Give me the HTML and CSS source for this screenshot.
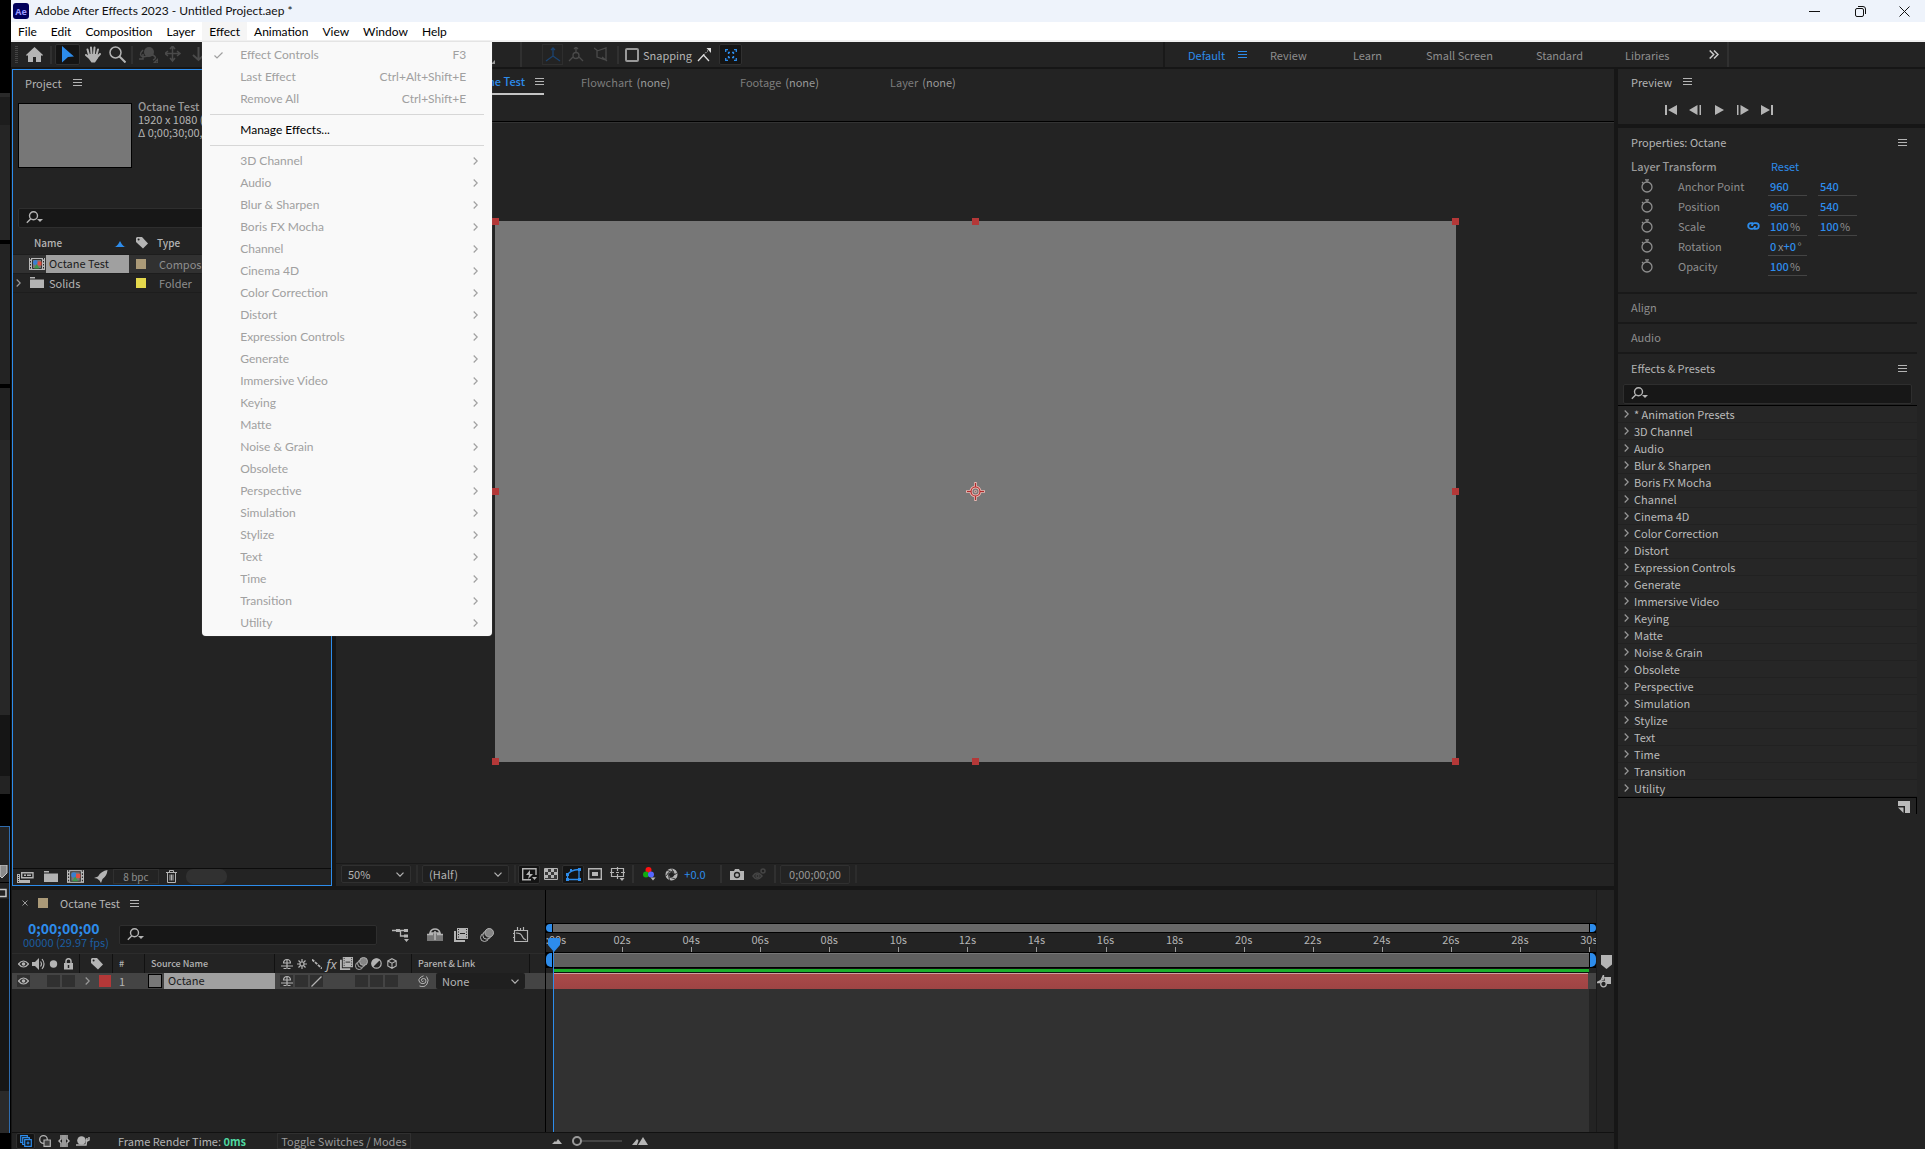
FILE: index.html
```html
<!DOCTYPE html>
<html lang="en">
<head>
<meta charset="utf-8">
<title>Adobe After Effects 2023 - Untitled Project.aep *</title>
<link rel="stylesheet" href="styles.css">
</head>
<body>
<svg class="defs" aria-hidden="true">
  <symbol id="burger" viewBox="0 0 9 9"><path d="M0 1.5h9M0 4.5h9M0 7.5h9" stroke="currentColor"/></symbol>
  <symbol id="search" viewBox="0 0 18 14"><g fill="none" stroke="currentColor" stroke-width="1.4"><circle cx="7.5" cy="4.8" r="4"/><path d="M4.8 7.8L.8 11.8"/></g><path d="M11 8h6l-3 3z" fill="currentColor"/></symbol>
  <symbol id="down" viewBox="0 0 8 5"><path d="M.5.7L4 4.2 7.5.7" fill="none" stroke="currentColor" stroke-width="1.2"/></symbol>
  <symbol id="right" viewBox="0 0 5 8"><path d="M.7.5L4.2 4 .7 7.5" fill="none" stroke="currentColor" stroke-width="1.2"/></symbol>
  <symbol id="watch" viewBox="0 0 12 14"><g fill="none" stroke="currentColor" stroke-width="1.3"><circle cx="6" cy="8" r="5"/><path d="M4 .8h4M6 1v2M1 3l1.6 1.6"/></g></symbol>
  <symbol id="tag" viewBox="0 0 12 12"><path d="M0 1l1-1h5l6 6.5L7 11.500 0 5z" fill="currentColor"/><circle cx="2.600" cy="2.600" r="1" fill="#232323"/></symbol>
  <symbol id="folder" viewBox="0 0 14 11"><path d="M0 0h5v1.500H0zM0 2.500h14V11H0z" fill="currentColor"/></symbol>
  <symbol id="comp" viewBox="0 0 16 12"><path d="M0 0h16v12H0z" fill="#b8b8b8"/><path d="M1.500 0v12M14.500 0v12" stroke="#232323" stroke-dasharray="1.500 1.500"/><path d="M3.500 1.500h9v9h-9z" fill="#777" stroke="#333"/><circle cx="6.500" cy="4.500" r="2.500" fill="#3a7fd0"/><path d="M8.500 3.500h4v4h-4z" fill="#e05040"/><path d="M5 10.500l2.700-4.500 2.800 4.500z" fill="#3c9a48"/></symbol>
  <symbol id="eye" viewBox="0 0 11 8"><path d="M.5 4Q5.500-2 10.500 4 5.500 10 .5 4z" fill="none" stroke="currentColor" stroke-width="1.200"/><circle cx="5.500" cy="4" r="1.800" fill="currentColor"/></symbol>
  <symbol id="shy" viewBox="0 0 12 12"><g fill="none" stroke="currentColor" stroke-width="1.200"><path d="M2.500 5.500Q2.500 1.500 6 1.500T9.500 5.500M2 5h8M0 8h12M6 2v9M2.500 10.500H5M7 10.500h2.500"/></g></symbol>
  <symbol id="film" viewBox="0 0 14 14"><path d="M3 0h11v11H3zM0 3h2v9h9v2H0z" fill="currentColor"/><path d="M4.500 1v9M12.500 1v9" stroke="#232323" stroke-dasharray="1 1.500"/><path d="M6 5.500h5" stroke="#232323"/></symbol>
  <symbol id="blur" viewBox="0 0 14 14"><g fill="#232323" stroke="currentColor"><circle cx="4.500" cy="9.500" r="4"/><circle cx="6.800" cy="7.200" r="4"/><circle cx="9.200" cy="4.800" r="4.300" fill="#858585"/></g></symbol>
</svg>

<div class="desktop">
<div class="behind" aria-hidden="true">
  <i class="b1"></i><i class="b2"></i><i class="b3"></i><i class="b4"></i><i class="b5"></i><i class="b6"></i>
  <div class="b7">
    <svg width="9" height="44" viewBox="0 0 9 44"><path d="M0 0h7v8L2 13l-2-2z" fill="#8a8a8a" stroke="#c8c8c8"/><path d="M0 17.500h9" stroke="#000"/><path d="M0 24.500h6v7H0" fill="none" stroke="#c8c8c8" stroke-width="1.500"/></svg>
  </div>
</div>

<div class="app">
  <header class="titlebar">
    <svg width="16" height="16" viewBox="0 0 16 16"><rect width="16" height="16" rx="3" fill="#00005b"/><text x="8" y="12" text-anchor="middle" class="logo-text">Ae</text></svg>
    <h1>Adobe After Effects 2023 - Untitled Project.aep *</h1>
    <button aria-label="Minimize"><svg width="11" height="11" viewBox="0 0 11 11"><path d="M0 5.500h11" stroke="#111"/></svg></button>
    <button aria-label="Restore"><svg width="11" height="11" viewBox="0 0 11 11"><g fill="none" stroke="#111"><rect x=".5" y="2.500" width="8" height="8" rx="1.500"/><path d="M3 .5h5q2.500 0 2.500 2.500v5"/></g></svg></button>
    <button aria-label="Close"><svg width="11" height="11" viewBox="0 0 11 11"><path d="M.5.5l10 10M10.500.5l-10 10" stroke="#111"/></svg></button>
  </header>

  <nav class="menubar">
    <button>File</button><button>Edit</button><button>Composition</button><button>Layer</button>
    <div class="open">
      <button class="active">Effect</button>
      <div class="popup" role="menu">
        <button disabled><svg class="check" width="9" height="7" viewBox="0 0 9 7"><path d="M.5 3.500L3 6l5.500-5.500" fill="none" stroke="#a0a0a0" stroke-width="1.200"/></svg>Effect Controls<span>F3</span></button>
        <button disabled>Last Effect<span>Ctrl+Alt+Shift+E</span></button>
        <button disabled>Remove All<span>Ctrl+Shift+E</span></button>
        <hr>
        <button>Manage Effects...</button>
        <hr>
        <button disabled>3D Channel<svg><use href="#right"/></svg></button>
        <button disabled>Audio<svg><use href="#right"/></svg></button>
        <button disabled>Blur &amp; Sharpen<svg><use href="#right"/></svg></button>
        <button disabled>Boris FX Mocha<svg><use href="#right"/></svg></button>
        <button disabled>Channel<svg><use href="#right"/></svg></button>
        <button disabled>Cinema 4D<svg><use href="#right"/></svg></button>
        <button disabled>Color Correction<svg><use href="#right"/></svg></button>
        <button disabled>Distort<svg><use href="#right"/></svg></button>
        <button disabled>Expression Controls<svg><use href="#right"/></svg></button>
        <button disabled>Generate<svg><use href="#right"/></svg></button>
        <button disabled>Immersive Video<svg><use href="#right"/></svg></button>
        <button disabled>Keying<svg><use href="#right"/></svg></button>
        <button disabled>Matte<svg><use href="#right"/></svg></button>
        <button disabled>Noise &amp; Grain<svg><use href="#right"/></svg></button>
        <button disabled>Obsolete<svg><use href="#right"/></svg></button>
        <button disabled>Perspective<svg><use href="#right"/></svg></button>
        <button disabled>Simulation<svg><use href="#right"/></svg></button>
        <button disabled>Stylize<svg><use href="#right"/></svg></button>
        <button disabled>Text<svg><use href="#right"/></svg></button>
        <button disabled>Time<svg><use href="#right"/></svg></button>
        <button disabled>Transition<svg><use href="#right"/></svg></button>
        <button disabled>Utility<svg><use href="#right"/></svg></button>
      </div>
    </div>
    <button>Animation</button><button>View</button><button>Window</button><button>Help</button>
  </nav>

  <div class="toolbar">
    <div class="tools">
      <span class="grip"></span>
      <button class="home" aria-label="Home"><svg width="17" height="15" viewBox="0 0 17 15"><path d="M8.500 0L17 8l-1 1-1-1v7h-5v-5H7v5H2V8L1 9 0 8z" fill="currentColor"/></svg></button>
      <span class="sep"></span>
      <button class="on" aria-label="Selection"><svg width="13" height="17" viewBox="0 0 13 17"><path d="M1 0l12 10.500-6 .5-6 5.500z" fill="#2d8ceb"/></svg></button>
      <button aria-label="Hand"><svg width="16" height="17" viewBox="0 0 16 17"><g stroke="currentColor" stroke-width="2" stroke-linecap="round"><path d="M4 9L2.500 3.500M6.500 8L6 1.500M9 8l.5-6.500M11.500 9L13 3.500M4.500 12L1 9M11 12.500L15 8"/></g><path d="M3 8h9.500l.5 4-3 4.500H6.500L4 13z" fill="currentColor"/></svg></button>
      <button aria-label="Zoom"><svg width="17" height="17" viewBox="0 0 17 17"><g fill="none" stroke="currentColor"><circle cx="6.500" cy="6.500" r="5.500" stroke-width="1.500"/><path d="M10.500 10.500l6 6" stroke-width="2"/></g></svg></button>
      <span class="sep"></span>
      <button class="dim" aria-label="Orbit"><svg width="19" height="17" viewBox="0 0 19 17"><circle cx="10" cy="6" r="5" fill="currentColor"/><path d="M4 4Q-1 9 4 11l10-2q5 3 0 5M4 8v5H0M19 13v4h-4z" fill="none" stroke="currentColor" stroke-width="1.500"/></svg></button>
      <button class="dim" aria-label="Pan"><svg width="17" height="17" viewBox="0 0 17 17"><path d="M0 7.500h15M7.500 0v15M5 3l2.500-3L10 3M5 12l2.500 3L10 12M3 5L0 7.500 3 10M12 5l3 2.500L12 10" fill="none" stroke="currentColor" stroke-width="1.500"/></svg></button>
      <button class="dim" aria-label="Dolly"><svg width="13" height="17" viewBox="0 0 13 17"><path d="M6.500 1v12M1 9l5.500 5L12 9" fill="none" stroke="currentColor" stroke-width="2"/></svg></button>
    </div>
    <div class="axes">
      <svg class="corner" width="4" height="4" viewBox="0 0 4 4"><path d="M4 0v4H0z" fill="#999"/></svg>
      <span class="sep"></span>
      <button class="soft" aria-label="Local axis"><svg width="16" height="16" viewBox="0 0 16 16"><path d="M8 1v8l-7 5M8 9l7 5M6 3l2-2 2 2" fill="none" stroke="#1b4370" stroke-width="1.300"/></svg></button>
      <button aria-label="World axis"><svg width="16" height="16" viewBox="0 0 16 16"><g fill="none" stroke="#4a4a4a" stroke-width="1.300"><path d="M8 0v6M5 10l-4 4M11 10l4 4M6 2l2-2 2 2"/><circle cx="8" cy="8.500" r="3"/></g></svg></button>
      <button aria-label="View axis"><svg width="14" height="16" viewBox="0 0 14 16"><path d="M3 4l9-3v12l-9-3zM0 1l4 3M8 10l5 4" fill="none" stroke="#4a4a4a" stroke-width="1.300"/></svg></button>
      <span class="sep"></span>
      <label class="snap"><input type="checkbox">Snapping</label>
      <button aria-label="Snap edges"><svg width="15" height="15" viewBox="0 0 15 15"><path d="M1 14l5.500-6L12 14" fill="none" stroke="#ddd" stroke-width="1.300"/><path d="M6.500 8L11 3.500" stroke="#ddd" stroke-dasharray="1.500 1"/><path d="M9.500 1H14v5z" fill="#ddd"/></svg></button>
      <button class="on" aria-label="Snap collapse"><svg width="12" height="12" viewBox="0 0 12 12"><path d="M.7 3V.7H3M9 .7h2.300V3M11.300 9v2.300H9M3 11.300H.7V9M3.500 5V3.500H5M7 3.500h1.500V5M8.500 7v1.500H7M5 8.500H3.500V7" fill="none" stroke="#2d8ceb" stroke-width="1.300"/></svg></button>
    </div>
    <nav class="spaces">
      <a href="#" class="blue default">Default <svg class="burger"><use href="#burger"/></svg></a>
      <a href="#" class="review">Review</a><a href="#" class="learn">Learn</a><a href="#" class="small">Small Screen</a><a href="#" class="standard">Standard</a><a href="#" class="libs">Libraries</a>
      <button aria-label="More workspaces"><svg width="10" height="9" viewBox="0 0 10 9"><path d="M.7.5l4 4-4 4M5 .5l4 4-4 4" fill="none" stroke="#ccc" stroke-width="1.500"/></svg></button>
      <span class="sep"></span>
    </nav>
  </div>

  <main class="workspace">
    <div class="center">
      <div class="upper">
        <section class="project">
          <h2 class="tab">Project <svg class="burger"><use href="#burger"/></svg></h2>
          <div class="info">
            <div class="thumb"></div>
            <p><b>Octane Test</b><br>1920 x 1080 (1.00)<br>Δ 0;00;30;00, 29.97 fps</p>
          </div>
          <label class="search"><svg width="18" height="14"><use href="#search"/></svg><input type="text" aria-label="Search project"></label>
          <table class="items">
            <thead><tr><th class="c-name">Name<svg width="12" height="6" viewBox="0 0 12 6"><path d="M0 6q3 0 6-6 3 6 6 6z" fill="#2d8ceb"/></svg></th><th class="c-tag"><svg width="12" height="12"><use href="#tag"/></svg></th><th>Type</th></tr></thead>
            <tbody>
              <tr class="sel"><td class="c-name"><div><svg class="arrow"></svg><svg width="16" height="12"><use href="#comp"/></svg><span class="hl">Octane Test</span></div></td><td class="c-tag"><i class="chip tan"></i></td><td>Composition</td></tr>
              <tr><td class="c-name"><div><svg class="arrow"><use href="#right"/></svg><svg width="16" height="11"><use href="#folder"/></svg><span class="nm">Solids</span></div></td><td class="c-tag"><i class="chip yellow"></i></td><td>Folder</td></tr>
            </tbody>
          </table>
          <div class="pfoot">
            <button aria-label="Interpret footage"><svg width="17" height="12" viewBox="0 0 17 12"><path d="M4.700 1.700H16v5H4.700z" fill="none" stroke="currentColor" stroke-width="1.400"/><path d="M7 4.200h2M10 4.200h4" stroke="currentColor" stroke-width="1.500"/><path d="M0 3h3v6h10v3H0z" fill="currentColor"/><path d="M1.500 4v8" stroke="#232323" stroke-dasharray="1 1"/></svg></button>
            <button aria-label="New folder"><svg width="14" height="11"><use href="#folder"/></svg></button>
            <button aria-label="New composition"><svg width="17" height="13"><use href="#comp"/></svg></button>
            <button aria-label="Project settings"><svg width="14" height="13" viewBox="0 0 14 13"><path d="M13.500 0Q7 1 4 6.500L0 8l3 .5 2.500 2L7 13l1.500-4Q13 6 13.500 0z" fill="currentColor"/></svg></button>
            <button class="bpc">8 bpc</button>
            <button aria-label="Delete"><svg width="11" height="13" viewBox="0 0 11 13"><path d="M0 2.500h11M3.500 2.500v-2h4v2M1.500 3v9.500h8V3M4 4.500v6M5.500 4.500v6M7 4.500v6" fill="none" stroke="currentColor"/></svg></button>
            <span class="scroll"></span>
          </div>
        </section>

        <section class="comp">
          <div class="tabs">
            <a href="#" class="t1"><span>Composition</span><b>Octane Test</b><svg class="burger"><use href="#burger"/></svg></a>
            <a href="#" class="t2">Flowchart <em>(none)</em></a><a href="#" class="t3">Footage <em>(none)</em></a><a href="#" class="t4">Layer <em>(none)</em></a>
          </div>
          <div class="viewer">
            <div class="frame">
              <i class="h tl"></i><i class="h tc"></i><i class="h tr"></i><i class="h ml"></i><i class="h mr"></i><i class="h bl"></i><i class="h bc"></i><i class="h br"></i>
              <svg width="19" height="19" viewBox="0 0 19 19"><g fill="none"><path d="M9.500 0v5M9.500 14v5M0 9.500h5M14 9.500h5" stroke="#e9b5b0" stroke-width="2.500"/><circle cx="9.500" cy="9.500" r="4.500" stroke="#e9b5b0" stroke-width="3"/><circle cx="9.500" cy="9.500" r="4.500" stroke="#b02c2c" stroke-width="1.200"/><path d="M9.500 1v4M9.500 14v4M1 9.500h4M14 9.500h4" stroke="#b02c2c"/><circle cx="9.500" cy="9.500" r="1.200" stroke="#e9b5b0"/></g></svg>
            </div>
          </div>
          <div class="vfoot">
            <span class="drop zoom"><select aria-label="Magnification"><option>50%</option></select><svg width="8" height="5"><use href="#down"/></svg></span>
            <span class="sep"></span>
            <span class="drop res"><select aria-label="Resolution"><option>(Half)</option></select><svg width="8" height="5"><use href="#down"/></svg></span>
            <span class="sep"></span>
            <div class="vicons">
              <button class="on" aria-label="Fast previews"><svg width="15" height="13" viewBox="0 0 15 13"><path d="M14 7V.7H.7v11H9" fill="none" stroke="currentColor" stroke-width="1.400"/><path d="M8 2L4 7h3l-1 4 5-5H8z" fill="currentColor"/><path d="M10 9h5l-2.500 3z" fill="currentColor"/></svg></button>
              <button aria-label="Transparency grid"><svg width="14" height="12" viewBox="0 0 14 12"><path d="M.5.5h13v11H.5z" fill="#3a3a3a" stroke="currentColor"/><path d="M1 2.500h12M1 8.500h12" stroke="currentColor" stroke-width="3" stroke-dasharray="3"/><path d="M4 5.500h9" stroke="currentColor" stroke-width="3" stroke-dasharray="3"/></svg></button>
              <button class="on" aria-label="Mask visibility"><svg width="15" height="13" viewBox="0 0 15 13"><path d="M1.500 11.500V7Q4 2 13 1.500v10z" fill="none" stroke="#2d8ceb" stroke-width="1.300"/><path d="M0 10h3v3H0zM12 10h3v3h-3zM12 0h3v3h-3zM0 5h3v3H0zM4 1h2v2H4z" fill="#2d8ceb"/></svg></button>
              <button aria-label="Region of interest"><svg width="14" height="12" viewBox="0 0 14 12"><path d="M.7.7h12.600v10.600H.7z" fill="none" stroke="currentColor" stroke-width="1.400"/><path d="M4 4h6v4H4z" fill="currentColor"/></svg></button>
              <button aria-label="Guides"><svg width="15" height="14" viewBox="0 0 15 14"><path d="M1.500 1.500h12v8h-12zM7.500 0v4M7.500 7v5M0 5.500h4M11 5.500h4M6 5.500h3" fill="none" stroke="currentColor" stroke-width="1.200"/><path d="M9.500 11h5L12 14z" fill="currentColor"/></svg></button>
              <span class="sep"></span>
              <button aria-label="Channels"><svg width="13" height="14" viewBox="0 0 13 14"><circle cx="5.500" cy="3" r="3" fill="#f11"/><circle cx="3" cy="7.500" r="3" fill="#1a1"/><circle cx="8" cy="7.500" r="3" fill="#56f"/><path d="M7.500 10.500h5L10 13.500z" fill="currentColor"/></svg></button>
              <button aria-label="Reset exposure"><svg width="13" height="13" viewBox="0 0 13 13"><circle cx="6.500" cy="6.500" r="4.300" fill="none" stroke="currentColor" stroke-width="3.500"/><path d="M6.500.5L10 7M12 5l-6 4M10.500 11L4 9M4.500 12L3 5M1 8l4-5M2 2.500L9 4" stroke="#232323" stroke-width=".8"/></svg></button>
              <button class="blue">+0.0</button>
              <span class="sep"></span>
              <button aria-label="Snapshot"><svg width="14" height="11" viewBox="0 0 14 11"><path d="M0 2h4l1-2h4l1 2h4v9H0z" fill="currentColor"/><circle cx="7" cy="6" r="2.500" fill="none" stroke="#232323" stroke-width="1.300"/></svg></button>
              <button class="dim" aria-label="Show snapshot"><svg width="14" height="13" viewBox="0 0 14 13"><g fill="none" stroke="currentColor" stroke-width="1.500"><path d="M1 8q4-6 9 0-5 6-9 0z"/><circle cx="5.500" cy="8" r="1.500"/><circle cx="11" cy="3" r="2"/></g></svg></button>
              <span class="sep"></span>
            </div>
            <button class="time">0;00;00;00</button>
            <span class="sep"></span>
          </div>
        </section>
      </div>

      <section class="timeline">
        <div class="left">
          <div class="ttab"><button class="x" aria-label="Close tab"><svg width="6" height="6" viewBox="0 0 6 6"><path d="M.5.5l5 5M5.500.5l-5 5" stroke="#999"/></svg></button><i class="chip tan"></i><h2>Octane Test</h2><svg class="burger"><use href="#burger"/></svg></div>
          <div class="tctl">
            <div class="code"><b>0;00;00;00</b><small>00000 (29.97 fps)</small></div>
            <label class="search"><svg width="18" height="14"><use href="#search"/></svg><input type="text" aria-label="Search layers"></label>
            <div class="ticons">
              <button aria-label="Mini-flowchart"><svg width="18" height="14" viewBox="0 0 18 14"><path d="M0 2.500h13M8.500 2.500V8H12" fill="none" stroke="currentColor" stroke-width="1.300"/><path d="M4 1h4v3H4zM12 1h4v3h-4zM12 6.500h4v3h-4zM12 11h5l-2.500 3z" fill="currentColor"/></svg></button>
              <button aria-label="Hide shy layers"><svg width="16" height="14" viewBox="0 0 16 14"><path d="M0 6h16v7H0z" fill="#777"/><path d="M3 5q1-4 5-4t5 4zM0 6.500h6M10 6.500h6M8 3v9" fill="none" stroke="currentColor" stroke-width="1.600"/></svg></button>
              <button aria-label="Frame blending"><svg width="14" height="14"><use href="#film"/></svg></button>
              <button aria-label="Motion blur"><svg width="14" height="14"><use href="#blur"/></svg></button>
              <button aria-label="Graph editor"><svg width="16" height="16" viewBox="0 0 16 16"><path d="M1.500 3.500h13v11h-13zM4.500 0v3M7.500 1v2M10.500 0v3M0 6.500h2M0 10.500h2M3 6q5 0 6 3t4 4" fill="none" stroke="currentColor" stroke-width="1.200"/></svg></button>
            </div>
          </div>
          <div class="thead">
            <div class="g-av"><svg width="11" height="8"><use href="#eye"/></svg><svg width="13" height="12" viewBox="0 0 13 12"><path d="M0 4h3l4-4v12L3 8H0z" fill="currentColor"/><path d="M8.500 3.500q2 2.500 0 5M10 1q4 5 0 10" fill="none" stroke="currentColor" stroke-width="1.200"/></svg><svg width="11" height="8" viewBox="0 0 11 8"><circle cx="5.500" cy="4" r="3.700" fill="currentColor"/></svg><svg width="11" height="12" viewBox="0 0 11 12"><path d="M1 5h9v6.500H1z" fill="currentColor"/><path d="M3 5V3q0-2.300 2.500-2.300T8 3v2" fill="none" stroke="currentColor" stroke-width="1.500"/><path d="M5.500 7v3" stroke="#232323" stroke-width="1.500"/></svg></div>
            <div class="g-tag"><svg width="12" height="12"><use href="#tag"/></svg></div>
            <div class="g-num">#</div>
            <div class="g-src">Source Name</div>
            <div class="g-sw">
              <svg width="12" height="12"><use href="#shy"/></svg>
              <svg width="10" height="10" viewBox="0 0 10 10"><g fill="none" stroke="currentColor" stroke-width="1.200"><circle cx="5" cy="5" r="2"/><path d="M5 0v3M5 7v3M0 5h3M7 5h3M1.500 1.500l2 2M6.500 6.500l2 2M8.500 1.500l-2 2M3.500 6.500l-2 2"/></g></svg>
              <svg width="10" height="10" viewBox="0 0 10 10"><path d="M0 .5l10 9" stroke="currentColor" stroke-width="1.800" stroke-dasharray="3 1"/></svg>
              <span class="fx">fx</span>
              <svg width="13" height="13"><use href="#film"/></svg>
              <svg width="13" height="13"><use href="#blur"/></svg>
              <svg width="11" height="11" viewBox="0 0 11 11"><circle cx="5.500" cy="5.500" r="4.700" fill="none" stroke="currentColor" stroke-width="1.200"/><path d="M9 2A4.800 4.800 0 0 0 2 9z" fill="currentColor"/></svg>
              <svg width="10" height="11" viewBox="0 0 10 11"><path d="M5 .7l4.200 2.200v5L5 10.300.8 7.900v-5zM.8 3L5 5.200 9.200 3M5 5.200v5" fill="none" stroke="currentColor" stroke-width="1.100"/></svg>
            </div>
            <div class="g-par">Parent &amp; Link</div>
          </div>
          <div class="trow">
            <div class="g-av"><i class="cell"><svg width="11" height="8"><use href="#eye"/></svg></i><i></i><i class="cell"></i><i class="cell"></i></div>
            <div class="g-tag"><svg class="arrow"><use href="#right"/></svg><i class="chip red"></i></div>
            <div class="g-num">1</div>
            <div class="g-src"><i class="solid"></i><span class="hl">Octane</span></div>
            <div class="g-sw"><i class="cell"><svg width="12" height="12"><use href="#shy"/></svg></i><i class="cell"></i><i class="cell"><svg width="11" height="11" viewBox="0 0 11 11"><path d="M.5 10.500l10-10" stroke="currentColor" stroke-width="1.200"/></svg></i><i></i><i></i><i class="cell"></i><i class="cell"></i><i class="cell"></i></div>
            <div class="g-par"><svg width="12" height="12" viewBox="0 0 12 12"><path d="M6.500 6q-1.500 1.500-2-.5T6.500 3.500 9 6 6 8.700 2 6 6.500.8M9.500 1.500Q12.500 5 10 9T2.500 11" fill="none" stroke="currentColor"/></svg><span class="drop"><select aria-label="Parent"><option>None</option></select><svg width="8" height="5"><use href="#down"/></svg></span></div>
          </div>
        </div>

        <div class="tracks">
          <div class="nav"><i class="grab l"></i><i class="bar"></i><i class="grab r"></i></div>
          <div class="ruler"><span>0:00s</span><span>02s</span><span>04s</span><span>06s</span><span>08s</span><span>10s</span><span>12s</span><span>14s</span><span>16s</span><span>18s</span><span>20s</span><span>22s</span><span>24s</span><span>26s</span><span>28s</span><span>30s</span></div>
          <div class="nav work"><i class="grab l"></i><i class="bar"></i><i class="grab r"></i></div>
          <div class="cache"></div>
          <div class="layer"><i></i></div>
          <div class="empty"></div>
          <div class="playhead"><svg width="12" height="14" viewBox="0 0 12 14"><path d="M1 0h10l1 1v6l-6 7-6-7V1z" fill="#2d8ceb"/></svg></div>
        </div>

        <div class="gutter">
          <svg width="11" height="14" viewBox="0 0 11 14"><path d="M0 0h11v9.500L5.500 14 0 9.500z" fill="#b4b4b4"/></svg>
          <svg width="14" height="13" viewBox="0 0 14 13"><path d="M7 2h7v7H9z" fill="#b4b4b4"/><g fill="none" stroke="#b4b4b4" stroke-width="1.300"><path d="M6.500 0v4L0 7.500h3z"/><circle cx="6.500" cy="9" r="2.800" fill="#232323"/></g></svg>
        </div>

        <footer class="status">
          <button class="on" aria-label="Layer switches"><svg width="12" height="12" viewBox="0 0 12 12"><path d="M3 7.500H.7V.7h6.600V3M5 9.500H2.700V2.700h6.600V5M4.700 4.700h6.600v6.600H4.700zM8 6.500v3M6.500 8h3" fill="none" stroke="#2d8ceb" stroke-width="1.200"/></svg></button>
          <button aria-label="Transfer controls"><svg width="12" height="12" viewBox="0 0 12 12"><circle cx="4.500" cy="4.500" r="3.800" fill="none" stroke="currentColor" stroke-width="1.300"/><path d="M5 5h6.300v6.300H5z" fill="#444" stroke="currentColor" stroke-width="1.200"/></svg></button>
          <button aria-label="In and out"><svg width="12" height="12" viewBox="0 0 12 12"><path d="M4 0h4v12H4z" fill="#999"/><path d="M3 0v4L1 6l2 2v4M9 0v4l2 2-2 2v4" fill="none" stroke="currentColor" stroke-width="1.500"/></svg></button>
          <button aria-label="Render time"><svg width="14" height="10" viewBox="0 0 14 10"><circle cx="5.500" cy="4.500" r="4.300" fill="currentColor"/><path d="M0 9h10l1-7M13 1v3l-2 1" fill="none" stroke="currentColor" stroke-width="1.500"/></svg></button>
          <p>Frame Render Time: <b>0ms</b></p>
          <button class="toggle">Toggle Switches / Modes</button>
          <div class="tzoom">
            <svg width="10" height="5" viewBox="0 0 10 5"><path d="M0 5l3-3 1 1 2-3 4 5z" fill="currentColor"/></svg>
            <input type="range" min="0" max="100" value="0" aria-label="Timeline zoom">
            <svg width="16" height="8" viewBox="0 0 16 8"><path d="M0 8l5-6 1.500 1.500L5 8zM6 8l5-8 5 8z" fill="currentColor"/></svg>
          </div>
        </footer>
      </section>
    </div>

    <aside class="side">
      <section class="preview">
        <h2 class="tab">Preview <svg class="burger"><use href="#burger"/></svg></h2>
        <div class="play">
          <button aria-label="First frame"><svg width="12" height="10" viewBox="0 0 12 10"><path d="M0 0h2v10H0zM12 0v10L3 5z" fill="currentColor"/></svg></button>
          <button aria-label="Previous frame"><svg width="12" height="10" viewBox="0 0 12 10"><path d="M10.500 0H12v10h-1.500zM8.500 0v10L0 5z" fill="currentColor"/></svg></button>
          <button aria-label="Play"><svg width="12" height="10" viewBox="0 0 12 10"><path d="M2 0l9 5-9 5z" fill="currentColor"/></svg></button>
          <button aria-label="Next frame"><svg width="12" height="10" viewBox="0 0 12 10"><path d="M0 0h1.500v10H0zM3.500 0v10L12 5z" fill="currentColor"/></svg></button>
          <button aria-label="Last frame"><svg width="12" height="10" viewBox="0 0 12 10"><path d="M10 0h2v10h-2zM0 0v10l9-5z" fill="currentColor"/></svg></button>
        </div>
      </section>
      <section class="props">
        <h2 class="tab">Properties: Octane <svg class="burger"><use href="#burger"/></svg></h2>
        <div class="prow head"><b>Layer Transform</b><button class="blue">Reset</button></div>
        <div class="prow"><svg width="12" height="14"><use href="#watch"/></svg><span>Anchor Point</span><div class="val"><input aria-label="Anchor X" value="960"></div><div class="val"><input aria-label="Anchor Y" value="540"></div></div>
        <div class="prow"><svg width="12" height="14"><use href="#watch"/></svg><span>Position</span><div class="val"><input aria-label="Position X" value="960"></div><div class="val"><input aria-label="Position Y" value="540"></div></div>
        <div class="prow"><svg width="12" height="14"><use href="#watch"/></svg><span>Scale <svg width="13" height="8" viewBox="0 0 13 8"><g fill="none" stroke="#2d8ceb" stroke-width="1.800"><path d="M6 1.200H4a2.800 2.800 0 0 0 0 5.600h1.500Q8 6.500 8 4M7 6.800h2a2.800 2.800 0 0 0 0-5.600H7.500Q5 1.500 5 4"/></g></svg></span><div class="val"><input aria-label="Scale X" value="100">%</div><div class="val"><input aria-label="Scale Y" value="100">%</div></div>
        <div class="prow"><svg width="12" height="14"><use href="#watch"/></svg><span>Rotation</span><div class="val rot"><input aria-label="Turns" value="0">x<input aria-label="Degrees" value="+0">°</div></div>
        <div class="prow"><svg width="12" height="14"><use href="#watch"/></svg><span>Opacity</span><div class="val"><input aria-label="Opacity" value="100">%</div></div>
      </section>
      <h2 class="shut">Align</h2>
      <h2 class="shut">Audio</h2>
      <section class="presets">
        <h2 class="tab">Effects &amp; Presets <svg class="burger"><use href="#burger"/></svg></h2>
        <label class="search"><svg width="18" height="14"><use href="#search"/></svg><input type="text" aria-label="Search effects"></label>
        <ul>
          <li><svg><use href="#right"/></svg>* Animation Presets</li>
          <li><svg><use href="#right"/></svg>3D Channel</li>
          <li><svg><use href="#right"/></svg>Audio</li>
          <li><svg><use href="#right"/></svg>Blur &amp; Sharpen</li>
          <li><svg><use href="#right"/></svg>Boris FX Mocha</li>
          <li><svg><use href="#right"/></svg>Channel</li>
          <li><svg><use href="#right"/></svg>Cinema 4D</li>
          <li><svg><use href="#right"/></svg>Color Correction</li>
          <li><svg><use href="#right"/></svg>Distort</li>
          <li><svg><use href="#right"/></svg>Expression Controls</li>
          <li><svg><use href="#right"/></svg>Generate</li>
          <li><svg><use href="#right"/></svg>Immersive Video</li>
          <li><svg><use href="#right"/></svg>Keying</li>
          <li><svg><use href="#right"/></svg>Matte</li>
          <li><svg><use href="#right"/></svg>Noise &amp; Grain</li>
          <li><svg><use href="#right"/></svg>Obsolete</li>
          <li><svg><use href="#right"/></svg>Perspective</li>
          <li><svg><use href="#right"/></svg>Simulation</li>
          <li><svg><use href="#right"/></svg>Stylize</li>
          <li><svg><use href="#right"/></svg>Text</li>
          <li><svg><use href="#right"/></svg>Time</li>
          <li><svg><use href="#right"/></svg>Transition</li>
          <li><svg><use href="#right"/></svg>Utility</li>
        </ul>
        <div class="efoot"><button aria-label="New preset"><svg width="12" height="12" viewBox="0 0 12 12"><path d="M0 0h12v12H7V5H0z" fill="#bbb"/><path d="M0 6.500h5.500V12z" fill="#bbb"/></svg></button></div>
      </section>
    </aside>
  </main>
</div>
</div>
</body>
</html>
```
FILE: styles.css
```css
* { box-sizing: border-box; margin: 0; padding: 0; }
body { background: #000; color: #b4b4b4; font: 11px/16px "Noto Sans CJK SC", "Noto Sans", sans-serif; }
button, input, select { font: inherit; color: inherit; background: none; border: 0; outline: 0; }
button { display: flex; align-items: center; justify-content: center; white-space: nowrap; }
a { color: inherit; text-decoration: none; }
svg { flex: none; display: block; }
i { display: block; }
h1, h2 { font: inherit; }
.defs { position: absolute; width: 0; height: 0; }
.burger { width: 9px; height: 9px; color: #b4b4b4; }
.blue { color: #2d8ceb; }
.sep { width: 2px; height: 18px; background: #303030; flex: none; }
.chip { width: 10px; height: 10px; }
.tan { background: #ab9a78; }
.yellow { background: #e4d84c; }
.red { background: #b43838; width: 12px; height: 12px; }
.arrow { width: 5px; height: 8px; color: #999; }
.hl { background: #a0a0a0; color: #1c1c1c; }

.desktop { display: flex; min-height: 100vh; overflow: hidden; }

/* edge of the window that sits behind the application */
.behind { width: 11px; display: flex; flex-direction: column; border-right: 1px solid #000; }
.b1 { height: 97px; border-bottom: 4px solid #2a2a2a; }
.b2 { height: 143px; background: #252525; border-top: 28px solid #1d1d1d; }
.b3 { height: 148px; background: #232323; border: solid #000; border-width: 4px 0; }
.b4 { height: 327px; background: #272727; border-top: 52px solid #222; }
.b5 { height: 61px; background: #151515; }
.b6 { height: 22px; background: #232323; border-bottom: 4px solid #000; }
.b7 { height: 307px; margin-top: 28px; padding-top: 38px; background: linear-gradient(#232323 72px, #171717 72px 264px, #2a2a2a 264px); border: solid #2f6cae; border-width: 1px 1px 0 0; }

.app { flex: 1; min-width: 0; display: flex; flex-direction: column; background: #161616; }

.titlebar, .menubar { font-family: Lato, sans-serif; font-size: 12px; }
.titlebar { height: 22px; display: flex; align-items: center; padding-left: 2px; background: #eef3fb; color: #111; }
.titlebar h1 { flex: 1; padding-left: 6px; }
.titlebar button { width: 46px; height: 18px; }
.titlebar button:last-child { width: 42px; }
.logo-text { font: bold 9px "Open Sans", sans-serif; fill: #9999ff; }

.menubar { height: 20px; display: flex; background: #fff; color: #000; border-bottom: 2px solid #f0f0f0; }
.menubar > button, .menubar .active { height: 18px; padding: 2px 7px 0; }
.menubar .active { background: #f5f5f5; }
.open { position: relative; }
.popup { position: absolute; z-index: 5; left: 0; top: 20px; width: 290px; padding: 2px 0; background: #f9f9f9; border-radius: 0 0 4px 4px; box-shadow: 0 0 1px #777; }
.popup button { position: relative; width: 100%; height: 22px; padding: 0 14px 0 38px; justify-content: space-between; }
.popup button:disabled { color: #a0a0a0; }
.popup button span { padding-right: 12px; }
.popup button svg { width: 5px; height: 8px; }
.popup button .check { position: absolute; left: 12px; top: 8px; width: 9px; height: 7px; }
.popup hr { border: 0; height: 1px; margin: 4px 8px; background: #d7d7d7; }

.toolbar { height: 25px; display: flex; align-items: center; background: #232323; flex: none; }
.toolbar button { width: 25px; height: 21px; }
.tools { display: flex; align-items: center; width: 480px; }
.grip { width: 3px; height: 18px; margin: 0 5px 0 4px; background: repeating-linear-gradient(#444 0 1px, transparent 1px 2px); }
.tools .home { width: 22px; margin-right: 4px; }
.tools .sep { margin: 0 3px 0 1px; }
.on { background: #141414; border: 1px solid #303030; border-radius: 2px; }
.tools .dim { color: #4a4a4a; }
.axes { display: flex; align-items: center; flex: 1; }
.axes .sep { margin: 0 6px 0 4px; }
.axes .sep:nth-child(2) { margin: 0 20px 0 25px; height: 25px; }
.axes .corner { margin-top: 14px; }
.axes .soft { border: 1px solid #2e2e2e; width: 21px; }
.snap { display: flex; align-items: center; gap: 4px; width: 67px; flex: none; }
.snap input { appearance: none; flex: none; width: 14px; height: 14px; border: 2px solid #999; border-radius: 2px; }
.toolbar .axes .on { width: 23px; margin-left: 2px; }
.spaces { display: flex; align-items: center; height: 25px; padding-right: 196px; border-left: 2px solid #191919; color: #8e8e8e; }
.spaces a { display: flex; align-items: center; white-space: nowrap; }
.spaces .default { justify-content: space-between; width: 82px; padding: 0 0 0 23px; color: #2d8ceb; }
.spaces .default .burger { color: #2d8ceb; }
.spaces .review { width: 106px; padding-left: 23px; }
.spaces .learn { width: 73px; }
.spaces .small { width: 110px; }
.spaces .standard { width: 89px; }
.spaces .libs { width: 76px; }
.spaces .sep { height: 25px; margin-left: 1px; }

.workspace { flex: 1; display: flex; margin-top: 2px; }
.center { flex: 1; min-width: 0; display: flex; flex-direction: column; padding-left: 1px; }
.upper { flex: 1; display: flex; gap: 4px; }
.project { width: 320px; display: flex; flex-direction: column; background: #232323; border: 1px solid #2d8ceb; }
.tab { display: flex; align-items: center; gap: 11px; height: 25px; padding-left: 12px; white-space: nowrap; }
.info { display: flex; gap: 6px; height: 105px; padding: 5px 0 0 5px; overflow: hidden; }
.thumb { width: 114px; height: 65px; margin-top: 3px; background: #777; border: 1px solid #000; flex: none; }
.info p { line-height: 13px; white-space: nowrap; }
.info b, .props b { font-weight: 500; color: #999; }
.search { display: flex; align-items: center; height: 20px; margin: 0 5px; padding-left: 7px; background: #171717; border: 1px solid #2e2e2e; border-radius: 2px; }
.search input { flex: 1; min-width: 0; }
.project > .search { margin: 8px 5px 5px; }
.items { width: 100%; border-collapse: collapse; table-layout: fixed; }
.items tr { height: 19px; border-bottom: 1px solid #1d1d1d; }
.items thead tr { height: 21px; }
.items th { font-size: 10px; font-weight: 500; text-align: left; padding-left: 4px; }
.items th.c-name { padding-left: 21px; }
.items .c-name { width: 117px; }
.items th.c-name svg { float: right; margin-top: 6px; margin-right: 4px; }
.items .c-tag { width: 23px; padding-left: 6px; }
.items td { padding-left: 6px; color: #8e8e8e; }
.items td.c-name { padding: 0; color: #b4b4b4; }
.c-name div { display: flex; align-items: center; height: 18px; padding-left: 3px; }
.c-name .arrow { margin-right: 8px; }
.c-name .hl { width: 83px; height: 18px; margin-left: 1px; padding: 0 0 0 3px; }
.c-name .nm { margin-left: 4px; }
.sel { background: #313131; }
.pfoot { display: flex; align-items: center; height: 17px; margin-top: auto; border-top: 1px solid #0c0c0c; padding-bottom: 1px; }
.pfoot button { width: 25px; margin-left: 0; }
.pfoot .bpc { width: 46px; height: 15px; border: 1px solid #303030; font-size: 10px; color: #8e8e8e; }
.scroll { width: 41px; height: 15px; margin-left: 2px; border-radius: 7px; background: #313131; }

.comp { flex: 1; min-width: 0; display: flex; flex-direction: column; background: #232323; }
.tabs { display: flex; height: 54px; border-bottom: 1px solid #333; box-shadow: inset 0 -1px #000; color: #7d7d7d; }
.tabs a { height: 26px; display: flex; align-items: center; gap: 4px; white-space: nowrap; }
.tabs b { font-weight: 500; color: #2d8ceb; }
.tabs em { font-style: normal; color: #999; }
.tabs .t1 { width: 200px; margin-left: 8px; justify-content: flex-end; border-bottom: 2px solid #c4c4c4; }
.tabs .burger { margin-left: 6px; }
.tabs .t2 { margin-left: 37px; width: 159px; }
.tabs .t3 { width: 150px; }
.viewer { flex: 1; display: flex; align-items: center; justify-content: center; padding-bottom: 4px; }
.frame { position: relative; display: flex; align-items: center; justify-content: center; width: 961px; height: 541px; background: #777; }
.h { position: absolute; width: 7px; height: 7px; background: #b43838; }
.tl, .ml, .bl { left: -3px; } .tc, .bc { left: 477px; } .tr, .mr, .br { right: -3px; }
.tl, .tc, .tr { top: -3px; } .ml, .mr { top: 267px; } .bl, .bc, .br { bottom: -3px; }
.vfoot { display: flex; align-items: center; height: 23px; padding: 0 0 2px 5px; border-top: 1px solid #191919; }
.drop { display: flex; align-items: center; height: 18px; padding-right: 6px; border: 1px solid #303030; background: #1f1f1f; border-radius: 2px; }
.drop select { flex: 1; appearance: none; min-width: 0; padding-left: 6px; }
.zoom { width: 70px; } .res { width: 87px; }
.vfoot > .sep { margin: 0 4px 0 5px; background: #2c2c2c; }
.vfoot > .sep + .vicons { margin-left: -2px; }
.vicons { display: flex; align-items: center; }
.vicons button { width: 22px; height: 19px; }
.vicons .sep { margin: 0 4px; }
.vicons .dim { color: #444; }
.vicons .blue { width: 26px; margin-right: 8px; }
.time { width: 70px; height: 19px; border: 1px solid #303030; border-radius: 2px; color: #999; }

.timeline { display: grid; grid-template-columns: 534px minmax(0, 1fr) 18px; grid-template-rows: 1fr 17px; height: 259px; margin-top: 4px; background: #232323; }
.left { border-right: 1px solid #000; }
.ttab { display: flex; align-items: center; height: 26px; padding-left: 10px; }
.ttab .chip { margin: 0 12px 0 10px; }
.ttab h2 { width: 70px; }
.tctl { display: flex; height: 37px; }
.code { width: 107px; padding: 5px 0 0 11px; text-align: left; color: #1b5da0; white-space: nowrap; }
.code b { display: block; font-size: 14px; line-height: 15px; padding-left: 5px; color: #2d8ceb; }
.code small { display: block; font-size: 11px; line-height: 12px; }
.tctl .search { width: 258px; margin: 9px 0 0; }
.ticons { display: flex; align-items: center; height: 20px; margin: 9px 0 0 10px; }
.ticons button { width: 26px; }
.ticons button:first-child { width: 28px; margin-right: 7px; }
.ticons button:last-child { margin-left: 8px; }
.thead, .trow { display: grid; grid-template-columns: 68px 33px 32px 130px 137px 1fr; }
.thead { height: 20px; border-top: 1px solid #2c2c2c; font-size: 9px; font-weight: 500; }
.thead > div, .trow > div { display: flex; align-items: center; min-width: 0; white-space: nowrap; }
.thead > div { box-shadow: inset -1px 0 #111; }
.trow { height: 16px; background: #444; }
.trow .g-av, .thead .g-av { display: grid; grid-template-columns: repeat(4, 15px); justify-items: center; padding-left: 4px; }
.thead .g-tag { justify-content: center; }
.trow .g-tag { gap: 9px; padding-left: 5px; }
.g-num { padding-left: 6px; }
.thead .g-src { padding-left: 6px; }
.solid { width: 14px; height: 14px; margin: 0 2px 0 3px; background: #777; border: 1px solid #000; flex: none; }
.trow .g-src .hl { flex: 1; height: 16px; padding-left: 4px; line-height: 14px; }
.thead .g-sw, .trow .g-sw { display: grid; grid-template-columns: repeat(8, 15px); justify-items: center; align-items: center; padding-left: 4px; }
.cell { width: 13px; height: 12px; background: #303030; display: flex; align-items: center; justify-content: center; }
.fx { font: italic 13px/16px "Noto Sans", sans-serif; }
.thead .g-par { padding-left: 6px; margin-right: 15px; }
.trow .g-par { padding-left: 5px; gap: 7px; }
.trow .drop { width: 89px; height: 16px; border: 0; background: #1f1f1f; }

.tracks { position: relative; display: flex; flex-direction: column; padding-top: 33px; overflow: hidden; }
.nav { display: flex; gap: 1px; height: 10px; border: solid #000; border-width: 1px 0; background: #000; }
.nav .bar { flex: 1; background: #686868; }
.nav.work { height: 16px; }
.work .bar { background: #5f5f5f; border-top: 1px solid #777; }
.grab { width: 6px; background: #2d8ceb; }
.grab.l { border-radius: 5px 0 0 5px; } .grab.r { border-radius: 0 5px 5px 0; }
.ruler { display: flex; justify-content: space-between; height: 19px; padding: 0 7px; overflow: hidden; }
.ruler span { width: 40px; height: 19px; margin: 0 -20px; text-align: center; line-height: 12px; position: relative; }
.ruler span::after { content: ""; position: absolute; bottom: 0; left: 20px; width: 1px; height: 5px; background: #999; }
.cache { height: 5px; margin: 0 7px; border-top: 1px solid #111; background: #1cb02c; border-bottom: 1px solid #111; }
.layer { height: 16px; padding: 0 8px 0 7px; background: #444; }
.layer i { height: 16px; background: linear-gradient(#aa4a4a, #9e4444); border-top: 1px solid #d0a0a0; }
.empty { flex: 1; margin: 0 7px; background: #313131; }
.playhead { position: absolute; left: 7px; top: 48px; bottom: 0; width: 1px; background: #2d8ceb; display: flex; justify-content: center; }
.gutter { padding: 65px 0 0 4px; border-left: 1px solid #1a1a1a; }
.gutter svg + svg { margin: 6px 0 0 -4px; }
.status { grid-column: 1 / -1; display: flex; align-items: center; border-top: 1px solid #111; padding-left: 4px; }
.status button { width: 19px; height: 16px; }
.status p { margin-left: 26px; width: 159px; white-space: nowrap; }
.status b { color: #4fd6a0; }
.status .toggle { width: 134px; border: 1px solid #303030; color: #999; }
.tzoom { display: flex; align-items: center; margin-left: 141px; gap: 10px; }
.tzoom input { appearance: none; width: 50px; height: 2px; background: #444; }
.tzoom input::-webkit-slider-thumb { appearance: none; width: 10px; height: 10px; border: 2px solid #999; border-radius: 50%; background: #232323; }

.side { width: 311px; padding-right: 8px; background: #232323; border-left: 4px solid #161616; }
.side .tab { padding-left: 13px; }
.preview { height: 59px; border-bottom: 4px solid #161616; margin-right: -8px; }
.play { display: flex; padding: 10px 0 0 41px; }
.play button { width: 24px; height: 12px; }
.props { height: 164px; }
.props .tab, .presets .tab { justify-content: space-between; height: 28px; padding: 0 10px 0 13px; }
.prow { display: flex; align-items: center; height: 20px; padding-left: 23px; color: #8e8e8e; }
.prow.head { padding-left: 13px; }
.prow.head b { width: 140px; }
.prow > span { display: flex; justify-content: space-between; align-items: center; width: 82px; margin: 0 8px 0 25px; }
.val { display: flex; align-items: center; width: 39px; height: 20px; margin-right: 11px; padding-left: 2px; border-bottom: 1px solid #444; }
.val input { width: 20px; color: #2d8ceb; font-weight: 500; }
.rot input { width: 8px; }
.rot input + input { width: 14px; }
.shut { height: 30px; padding: 5px 0 0 13px; border-top: 2px solid #191919; color: #8e8e8e; }
.presets { border-top: 2px solid #191919; }
.presets .search { margin-top: 2px; }
.presets ul { list-style: none; margin-top: 1px; border: solid #000; border-width: 1px 0; background: #262626; }
.presets li { display: flex; align-items: center; gap: 5px; height: 17px; padding-left: 6px; border-bottom: 1px solid #212121; color: #bbb; }
.presets li svg { width: 5px; height: 8px; color: #999; }
.efoot { display: flex; justify-content: flex-end; height: 16px; padding: 2px 6px 0; border-right: 1px solid #000; }
```
